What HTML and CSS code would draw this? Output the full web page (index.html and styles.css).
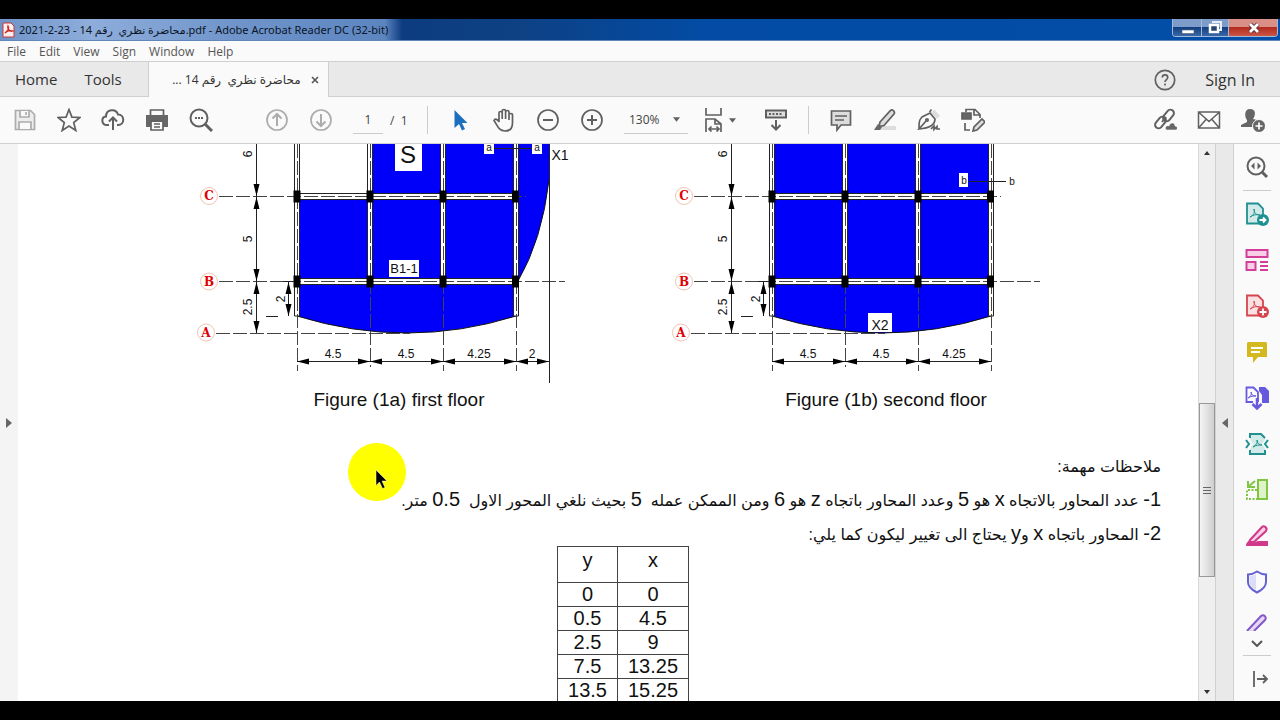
FILE: index.html
```html
<!DOCTYPE html>
<html lang="en">
<head>
<meta charset="utf-8">
<title>Adobe Acrobat Reader DC</title>
<link rel="stylesheet" href="styles.css">
</head>
<body>
<div class="window">
  <header class="titlebar">
    <svg class="app-icon" viewBox="0 0 13 16"><path d="M1 1h8l3 3v11H1z" fill="#fbeeee" stroke="#c33a34"/><path d="M3 11c3-2 4-5 3-7-1 3 2 6 5 5-3-1-6 0-8 2z" fill="none" stroke="#cf2a20" stroke-width="1.3"/></svg>
    <h1 class="title"><bdi dir="rtl">محاضرة نظري  رقم 14 - <bdi dir="ltr">2021-2-23</bdi></bdi>.pdf - Adobe Acrobat Reader DC (32-bit)</h1>
    <div class="controls">
      <button class="ctl" aria-label="Minimize"><svg width="28" height="18"><rect x="9" y="11" width="12" height="3.500" fill="#fff" stroke="#4a5a78" stroke-width=".6"/></svg></button>
      <button class="ctl" aria-label="Restore"><svg width="26" height="18"><path d="M10 3h9v8h-3" fill="none" stroke="#e8edf5" stroke-width="2"/><rect x="8" y="6" width="8" height="7" fill="#28456f" stroke="#fff" stroke-width="2.500"/></svg></button>
      <button class="ctl close" aria-label="Close"><svg width="48" height="18"><path d="M21 5l8 8M29 5l-8 8" stroke="#503038" stroke-width="4.500"/><path d="M21 5l8 8M29 5l-8 8" stroke="#fff" stroke-width="2.800"/></svg></button>
    </div>
  </header>
  <nav class="menubar">
    <button>File</button><button>Edit</button><button>View</button><button>Sign</button><button>Window</button><button>Help</button>
  </nav>
  <div class="tabs">
    <button class="tab home">Home</button>
    <button class="tab tools">Tools</button>
    <div class="tab doc"><bdi class="doc-name" dir="rtl">محاضرة نظري  رقم 14 ...</bdi><button class="tab-close" aria-label="Close tab"><svg width="8" height="8"><path d="M1 1l6 6M7 1L1 7" stroke="#555" stroke-width="1.600"/></svg></button></div>
    <div class="account">
      <button class="help" aria-label="Help"><svg width="22" height="22" fill="none" stroke="#606060" stroke-width="1.700"><circle cx="11" cy="11" r="9.700"/><path d="M8.300 8.500c0-3.500 5.400-3.500 5.400 0 0 2-2.700 2.100-2.700 4.400M11 14.500v2"/></svg></button>
      <button class="signin">Sign In</button>
    </div>
  </div>
  <div class="toolbar">
    <div class="group">
      <button class="tool faded" aria-label="Save"><svg viewBox="0 0 24 24"><path d="M2.500 2.500h15l4 4v15h-19z" fill="#e2e2e2"/><path d="M7 3v6h9V3M6 21v-7h12v7M13 4v3" fill="#fafafa"/></svg></button>
      <button class="tool" aria-label="Star"><svg viewBox="0 0 24 24"><path d="M12 1.500l2.900 7.600 8 .4-6.200 5.100 2.100 7.900-6.800-4.400-6.800 4.400 2.100-7.900L1.100 9.500l8-.4z"/></svg></button>
      <button class="tool" aria-label="Upload"><svg viewBox="0 0 24 24"><path d="M8 17H6c-6 0-6-8-1-8.500C5 1 15 0 17 6.500c7 0 7 10.500 0 10.500h-1M12 22V10M8 13.500L12 9.500l4 4" stroke-width="2"/></svg></button>
      <button class="tool" aria-label="Print"><svg viewBox="0 0 24 24"><path d="M5.500 8V2h13v6"/><path d="M1 7h22v12h-5v-5H6v5H1z" fill="#666" stroke="none"/><path d="M6 13h12v9H6zM9 16h6M9 19h6"/></svg></button>
      <button class="tool" aria-label="Find"><svg viewBox="0 0 24 24"><circle cx="10" cy="10" r="8.500" stroke-width="2"/><path d="M16 16l7 7" stroke-width="3"/><path d="M6 10h8" stroke-width="2" stroke-dasharray="2 1"/></svg></button>
    </div>
    <div class="group pages">
      <button class="tool faded" aria-label="Previous page"><svg viewBox="0 0 24 24"><circle cx="12" cy="12" r="10"/><path d="M12 18V6M7.500 10.500L12 6l4.500 4.500" stroke-width="2"/></svg></button>
      <button class="tool faded" aria-label="Next page"><svg viewBox="0 0 24 24"><circle cx="12" cy="12" r="10"/><path d="M12 6v12M7.500 13.500L12 18l4.500-4.500" stroke-width="2"/></svg></button>
      <input class="page-no" aria-label="Page" value="1"><span class="page-count">/&nbsp; 1</span>
    </div>
    <div class="group view">
      <button class="tool" aria-label="Select"><svg viewBox="0 0 24 24"><path d="M6.500 2v18l4.500-4 3 6.500 3-1.500-3-6h5.500z" fill="#1c6fbd" stroke="none"/></svg></button>
      <button class="tool" aria-label="Hand"><svg viewBox="0 0 24 24"><path d="M7 14V5c0-2 3.200-2 3.200 0v6-8c0-2 3.400-2 3.400 0v8-7c0-2 3.400-2 3.400 0v8-5c0-2 3.500-2 3.500 0v8c0 5-2 8-7.500 8-6.500 0-7.500-5.500-11-10.500 1-2.500 4-1 5 1.500z"/></svg></button>
      <button class="tool" aria-label="Zoom out"><svg viewBox="0 0 24 24"><circle cx="12" cy="12" r="10"/><path d="M7 12h10" stroke-width="2"/></svg></button>
      <button class="tool" aria-label="Zoom in"><svg viewBox="0 0 24 24"><circle cx="12" cy="12" r="10"/><path d="M7 12h10M12 7v10" stroke-width="2"/></svg></button>
      <div class="zoom"><select aria-label="Zoom"><option>130%</option></select><svg class="caret" viewBox="0 0 8 5"><path d="M0 0h8L4 5z"/></svg></div>
      <button class="tool fit" aria-label="Fit width"><svg viewBox="0 0 24 24" stroke-width="2"><path d="M4 0v7h15V0M4 24V11h9l6 5v8M13 11v5h6M7 21h10M9.500 18.500L7 21l2.500 2.500M14.500 18.500L17 21l-2.500 2.500"/></svg><svg class="caret" viewBox="0 0 8 5"><path d="M0 0h8L4 5z"/></svg></button>
      <button class="tool" aria-label="Read mode"><svg viewBox="0 0 24 24"><path d="M2 2.500h20v7H2z" fill="#ddd" stroke-width="2"/><path d="M5 6h14" stroke-width="2" stroke-dasharray="2 1.500"/><path d="M12 12v9M7.500 17L12 21.500 16.500 17" stroke-width="2"/></svg></button>
    </div>
    <div class="group annotate">
      <button class="tool" aria-label="Comment"><svg viewBox="0 0 24 24"><path d="M2.500 3h19v14H12l-4 5v-5H2.500z" fill="#ddd"/><path d="M6 8h12M6 12h9"/></svg></button>
      <button class="tool" aria-label="Highlight"><svg viewBox="0 0 24 24"><path d="M9 18h14v4H6z" fill="#ddd" stroke="none"/><path d="M7 14L17.500 2.500c2-1.500 5 1 3.500 3.500L11 17.500l-5 1z" fill="#ddd"/><path d="M1 22l4-6 4 3-2 3z" fill="#666" stroke="none"/></svg></button>
      <button class="tool" aria-label="Sign"><svg viewBox="0 0 24 24"><path d="M13.500 5l4-3.500L23 8l-3 2.500z" fill="#ddd" stroke="none"/><path d="M2 21c0-6 0-9 3-12l8-4 5 6c0 5-4 9-16 10l7-8M12.500 4l2-2.500"/><circle cx="10" cy="12" r="1.200"/><path d="M14 21l3-3v3.500l3-3v2.500h3"/></svg></button>
      <button class="tool" aria-label="Edit"><svg viewBox="0 0 24 24"><path d="M1 5h9v6H1z" fill="#666"/><path d="M5 4V1.500h9l5 5V10M13 2v5h6M4 15v7h5"/><path d="M12 23l1-4 8-8 3 3-8 8z" fill="#ddd"/></svg></button>
    </div>
    <div class="group share">
      <button class="tool" aria-label="Share link"><svg viewBox="0 0 24 24"><g stroke-width="2"><rect x="9" y="4" width="13" height="7" rx="3.500" transform="rotate(-50 15.500 7.500)"/><rect x="1" y="11" width="13" height="7" rx="3.500" transform="rotate(-50 7.500 14.500)"/><path d="M9 14l4-5"/></g><path d="M13 22c-2-4 2-5 3-4 1-4 6-4 6 0 3 0 3 4 1 4z" fill="#666" stroke="#fafafa" stroke-width=".6"/></svg></button>
      <button class="tool" aria-label="Mail"><svg viewBox="0 0 24 24"><path d="M1.500 4h21v16h-21zM2 4.500l10 9 10-9M2 19.500l7-8M22 19.500l-7-8" stroke-width="1.500"/></svg></button>
      <button class="tool" aria-label="Add people"><svg viewBox="0 0 24 24"><path d="M9 1c-6 0-5.500 8-3 11v2l-6 3v2h13l3-7-4-1c3-4 3-10-3-10z" fill="#666" stroke="none"/><circle cx="18" cy="18" r="6.500" fill="#666" stroke="#fafafa" stroke-width="1"/><path d="M14.500 18h7M18 14.500v7" stroke="#fff"/></svg></button>
    </div>
  </div>
  <div class="workspace">
    <button class="strip left" aria-label="Show navigation pane"><svg width="6" height="10"><path d="M0 0v10l6-5z" fill="#666"/></svg></button>
    <main class="page">
      <div class="figures">
        <figure>
          <svg class="plan" viewBox="179 144 440 240">
            <defs>
              <g id="slab"><path d="M297 144H516V316Q407 350 297 316z" fill="#0000fa"/><path d="M297 316Q407 350 516 316" fill="none" stroke="#111"/></g>
              <g id="frame">
                <g fill="#fff" stroke="#222" stroke-width="1">
                  <path d="M297 193.500h219v6H297zM297 278.500h219v6H297z"/>
                  <path d="M294.500 144v172h5V144M367.500 144v137h5V144M440.500 144v137h5V144M513.500 144v172h5V144"/>
                </g>
                <g fill="none" stroke="#444" stroke-width="1" stroke-dasharray="14 3">
                  <path d="M219 196.500H526M219 281.500H565M216 333.500H410"/>
                  <path d="M297.500 144V371M370.500 144V367M443.500 144V371M516.500 144V371"/>
                </g>
                <g fill="#000"><path d="M293.500 190.500h7v12h-7zM366.500 190.500h7v12h-7zM439.500 190.500h7v12h-7zM512 190.500h7v12h-7zM293.500 275.500h7v12h-7zM366.500 275.500h7v12h-7zM439.500 275.500h7v12h-7zM512 275.500h7v12h-7z"/></g>
                <g fill="none" stroke="#222"><path d="M256.500 144V333M288.500 281V316M266 316.500h12M297 361.500H516M283 281.500h10"/></g>
                <g fill="#000">
                  <path d="M256.500 196l-3-12h6zM256.500 197l-3 12h6zM256.500 281l-3-12h6zM256.500 282l-3 12h6zM256.500 333l-3-12h6zM288.500 282l-3 12h6zM288.500 316l-3-12h6z"/>
                  <path d="M297 361.500l12-3v6zM370 361.500l-12-3v6zM370 361.500l12-3v6zM443 361.500l-12-3v6zM443 361.500l12-3v6zM516 361.500l-12-3v6z"/>
                </g>
                <g fill="#fff" stroke="#f0c4b4"><circle cx="209" cy="196" r="8.500"/><circle cx="209" cy="281.500" r="8.500"/><circle cx="206" cy="332.500" r="8.500"/></g>
              </g>
            </defs>
            <use href="#slab"/>
            <path d="M516 144H549V180Q542 240 518 281H516z" fill="#0000fa"/><path d="M549 180Q542 240 518 281" fill="none" stroke="#111"/>
            <path d="M297 144h73v52h-73z" fill="#fff"/>
            <use href="#frame"/>
            <path d="M549.500 144V383M516 361.500h33" stroke="#222"/><path d="M516 361.500l12-3v6zM549 361.500l-12-3v6z"/>
            <path d="M395 144h27v27h-27zM484 144h10v10h-10zM532 144h10v10h-10zM389 260h30v17h-30z" fill="#fff"/>
            <path d="M494 148.500h38" stroke="#222"/>
            <g class="axis"><text x="209" y="200">C</text><text x="209" y="286">B</text><text x="206" y="337">A</text></g>
            <g class="dim"><text transform="translate(252 154) rotate(-90)">6</text><text transform="translate(252 239) rotate(-90)">5</text><text transform="translate(252 307) rotate(-90)">2.5</text><text transform="translate(285 299) rotate(-90)">2</text>
            <text x="333" y="358">4.5</text><text x="406" y="358">4.5</text><text x="479" y="358">4.25</text><text x="532" y="358">2</text></g>
            <g class="mark"><text class="big" x="408" y="163">S</text><text x="404" y="273">B1-1</text><text class="x" x="560" y="160">X1</text><text class="small" x="489" y="151">a</text><text class="small" x="537" y="151">a</text></g>
          </svg>
          <figcaption>Figure (1a) first floor</figcaption>
        </figure>
        <figure>
          <svg class="plan" viewBox="191 144 440 240">
            <use href="#slab"/><use href="#frame"/>
            <path d="M484 173h9v14h-9zM393 313h24v19h-24z" fill="#fff"/>
            <path d="M494 181.500h37" stroke="#222"/>
            <g class="axis"><text x="209" y="200">C</text><text x="209" y="286">B</text><text x="206" y="337">A</text></g>
            <g class="dim"><text transform="translate(252 154) rotate(-90)">6</text><text transform="translate(252 239) rotate(-90)">5</text><text transform="translate(252 307) rotate(-90)">2.5</text><text transform="translate(285 299) rotate(-90)">2</text>
            <text x="333" y="358">4.5</text><text x="406" y="358">4.5</text><text x="479" y="358">4.25</text></g>
            <g class="mark"><text class="x" x="405" y="330">X2</text><text class="small" x="489" y="184">b</text><text class="small" x="537" y="185">b</text></g>
          </svg>
          <figcaption>Figure (1b) second floor</figcaption>
        </figure>
      </div>
      <section class="notes" dir="rtl" lang="ar">
        <p>ملاحظات مهمة:</p>
        <p><span>1-</span> عدد المحاور بالاتجاه <span>x</span> هو <span>5</span> وعدد المحاور باتجاه <span>z</span> هو <span>6</span> ومن الممكن عمله  <span>5</span> بحيث نلغي المحور الاول  <span>0.5</span> متر.</p>
        <p><span>2-</span> المحاور باتجاه <span>x</span> و<span>y</span> يحتاج الى تغيير ليكون كما يلي:</p>
      </section>
      <table class="coords">
        <thead><tr><th>y</th><th>x</th></tr></thead>
        <tbody><tr><td>0</td><td>0</td></tr><tr><td>0.5</td><td>4.5</td></tr><tr><td>2.5</td><td>9</td></tr><tr><td>7.5</td><td>13.25</td></tr><tr><td>13.5</td><td>15.25</td></tr></tbody>
      </table>
      <svg class="pointer" viewBox="0 0 58 58"><circle cx="29" cy="29" r="29" fill="#ff0"/><path d="M28 27v15.500l3.500-3.500 3 6.500 2.500-1-3-6.500h5z" fill="#000" stroke="#fff" stroke-width=".5"/></svg>
    </main>
    <div class="scrollbar">
      <svg width="6" height="4"><path d="M0 4h6L3 0z" fill="#333"/></svg>
      <div class="thumb"><svg width="8" height="9"><path d="M0 1.500h8M0 4.500h8M0 7.500h8" stroke="#666"/></svg></div>
      <svg width="6" height="4"><path d="M0 0h6L3 4z" fill="#333"/></svg>
    </div>
    <button class="strip right" aria-label="Hide tools pane"><svg width="6" height="10"><path d="M6 0v10L0 5z" fill="#666"/></svg></button>
    <aside class="panel">
      <button class="item" aria-label="Search tools"><svg viewBox="0 0 24 24" stroke="#606060"><circle cx="11" cy="11" r="8.500" stroke-width="2"/><path d="M17 17l5 5" stroke-width="3"/><path d="M9.500 7.500v7L6 11zM12.500 7.500v7L16 11z" fill="#606060" stroke="none"/></svg></button>
      <hr>
      <button class="item" aria-label="Export PDF"><svg viewBox="0 0 24 24" stroke="#1f9090"><path d="M2 1.500h11l5 5v15H2z" fill="#d2ebe9"/><path d="M5 15c4-2 5-5 4-8 0 4 2 6 6 6-4-1-7 0-10 2z" stroke-width="1"/><circle cx="18" cy="18" r="6" fill="#1f9090" stroke="none"/><path d="M14.500 18h6M18 15.500l2.500 2.500-2.500 2.500" stroke="#fff"/></svg></button>
      <button class="item" aria-label="Organize pages"><svg viewBox="0 0 24 24" stroke="#d23e9a"><path d="M1.500 2h21v7h-21zM1.500 14h9v8h-9z" fill="#f8cfe6" stroke-width="2"/><path d="M15 14h8M15 18h8M15 22h8"/></svg></button>
      <button class="item" aria-label="Create PDF"><svg viewBox="0 0 24 24" stroke="#d6444e"><path d="M2 1.500h11l5 5v15H2z" fill="#fae0e0"/><path d="M5 15c4-2 5-5 4-8 0 4 2 6 6 6-4-1-7 0-10 2z" stroke-width="1"/><circle cx="18" cy="18" r="6" fill="#d6444e" stroke="none"/><path d="M14.500 18h7M18 14.500v7" stroke="#fff"/></svg></button>
      <button class="item" aria-label="Comment"><svg viewBox="0 0 24 24"><path d="M3 2h18l1 1v14H13l-5 6v-6H2V3z" fill="#d3b91d"/><path d="M6 8h12M6 12h9" stroke="#fff"/></svg></button>
      <button class="item" aria-label="Combine files"><svg viewBox="0 0 24 24" stroke="#6658df"><path d="M8 16H1.500V1.500h7L13 6v10"/><path d="M3 12c3-2 4-4 3-6 0 3 2 4 5 4-3 0-5 0-8 2z" stroke-width="1"/><path d="M14 1h6l4 4v12h-7V9l-3-4z" fill="#6658df" stroke="none"/><path d="M12 12v10M7.500 18l4.500 4.500 4.500-4.500" stroke-width="2.500"/></svg></button>
      <button class="item" aria-label="Compress PDF"><svg viewBox="0 0 24 24" stroke="#1f9090"><path d="M5 7V2h11l4 4v2l-3 4 3 4v6H5v-5l3-5z" fill="#d2ebe9" stroke="none"/><path d="M5 6V2h11l4 4M5 18v4h15v-4" stroke-width="2"/><path d="M1 8l3 4-3 4M23 8l-3 4 3 4" stroke-width="2"/><path d="M8 15c3-2 5-4 4-7 0 3 2 5 5 5-3 0-6 0-9 2z" stroke-width="1"/></svg></button>
      <button class="item" aria-label="Scan"><svg viewBox="0 0 24 24" stroke="#80c642"><path d="M13 2h9v19h-9z" fill="#dff3cb" stroke-width="2"/><path d="M12 12H2v9h10" stroke-width="2" stroke-dasharray="2 1.500"/><path d="M10 3L4 8M3 3v6h7" stroke-width="2"/></svg></button>
      <button class="item" aria-label="Redact"><svg viewBox="0 0 24 24" stroke="#d23889"><path d="M5 16L17 3c2-2 6 1 4 4L9 18H4z" fill="#f8cfe6" stroke-width="2"/><path d="M1 22c0-4 3-6 6-4 2 2 4-1 7-1h9v5z" fill="#d23889" stroke="none"/></svg></button>
      <button class="item" aria-label="Protect"><svg viewBox="0 0 24 24" stroke="#6461d2"><path d="M12 1.500c3 2 6 3 9 3V12c0 5-4 8-9 10.500C7 20 3 17 3 12V4.500c3 0 6-1 9-3z" stroke-width="2"/><path d="M11 4v16c-4-2-6.500-5-6.500-8V6c3 0 4-.5 6.500-2z" fill="#dcdcf7" stroke="none"/></svg></button>
      <button class="item cut" aria-label="Fill and sign"><svg viewBox="0 0 24 24" stroke="#8457c5"><path d="M2 20L16 5c3-2 6 1 4 4L9 20" fill="#e4d8f6" stroke-width="2"/></svg></button>
      <button class="more" aria-label="More tools"><svg width="12" height="7"><path d="M1 1l5 5 5-5" fill="none" stroke="#555" stroke-width="2"/></svg></button>
      <hr>
      <button class="item" aria-label="Collapse"><svg viewBox="0 0 24 24" stroke="#606060" stroke-width="2"><path d="M9 4v16M12 12h10M18 8l4 4-4 4"/></svg></button>
    </aside>
  </div>
</div>
</body>
</html>
```
FILE: styles.css
```css
* { box-sizing: border-box; }
body {
  margin: 0;
  height: 100vh;
  padding: 19px 0;
  background: #000;
  color: #444;
  font-family: "Open Sans", "DejaVu Sans", sans-serif;
  overflow: hidden;
}
button, input, select { font: inherit; color: inherit; border: 0; background: none; padding: 0; margin: 0; }
svg { display: block; flex: none; }
.window { height: 100%; display: flex; flex-direction: column; background: #fafafa; }

.titlebar {
  display: flex;
  align-items: center;
  flex: none;
  height: 22px;
  padding-left: 2px;
  border-bottom: 1px solid #5f87ba;
  background: linear-gradient(90deg, #6f93c8 0, #8eaddb 90px, #6f94ca 240px, #5c85c0 385px, #0d3c80 402px, #0d4184 520px, #034ba4 700px, #034ea8 100%);
}
.app-icon { width: 13px; height: 16px; }
.title { margin: 0 0 0 4px; font-family: "Noto Sans", "DejaVu Sans", sans-serif; font-size: 11px; line-height: 20px; font-weight: 400; color: #0b1526; white-space: pre; }
.controls { display: flex; margin: 0 2px 3px auto; height: 18px; border: 1px solid #a3bbdb; border-top: 0; border-radius: 0 0 4px 4px; overflow: hidden; }
.ctl { display: flex; background: linear-gradient(#7e9cc9 0 45%, #123f80 50%, #3c68a6); border-right: 1px solid #a3bbdb; }
.ctl.close { border-right: 0; background: linear-gradient(#d98e86 0 45%, #b32a1e 50%, #cc5646); }

.menubar { display: flex; align-items: center; flex: none; height: 20px; gap: 13px; padding: 1px 0 0 7px; font-size: 12px; line-height: 18px; color: #555; }

.tabs { display: flex; flex: none; height: 36px; border-top: 1px solid #cfcfcf; background: #e9e9e9; box-shadow: inset 0 -1px #cfcfcf; font-size: 15px; color: #333; }
.home, .tools { padding: 0 14px 2px 15px; }
.tools { padding: 0 26px 2px 13px; }
.doc { display: flex; align-items: center; justify-content: flex-end; gap: 10px; width: 181px; padding-right: 9px; background: #fafafa; border: solid #cfcfcf; border-width: 0 1px; font-size: 12px; }
.doc-name { white-space: pre; }
.account { display: flex; align-items: center; gap: 29px; margin-left: auto; padding-right: 25px; font-size: 16px; }

.toolbar { display: flex; align-items: center; flex: none; height: 47px; padding: 0 5px 0 3px; border-bottom: 1px solid #d0d0d0; }
.group { display: flex; align-items: center; }
.tool { display: flex; align-items: center; justify-content: center; width: 44px; height: 44px; }
.tool > svg { width: 24px; height: 24px; fill: none; stroke: #606060; stroke-width: 1.7; }
.tool.faded { opacity: .5; }
.pages { margin-left: 32px; }
.page-no { width: 30px; height: 28px; margin: 0 7px 0 10px; border-bottom: 1px solid #ccc; text-align: center; font-size: 12px; }
.page-count { width: 37px; font-size: 12px; }
.view { padding: 0 10px; border-left: 1px solid #ccc; border-right: 1px solid #ccc; height: 28px; }
.zoom { display: flex; align-items: center; width: 64px; height: 28px; margin: 0 9px 0 10px; padding: 0 8px 0 5px; border-bottom: 1px solid #ccc; font-size: 12px; }
.zoom select { appearance: none; flex: 1; min-width: 0; }
.caret, .tool > .caret { width: 7px; height: 5px; fill: #606060; stroke: none; }
.tool.fit { gap: 3px; margin-right: 13px; }
.annotate { margin-left: 10px; }
.share { margin-left: auto; }

.workspace { display: flex; flex: 1; min-height: 0; }
.strip { display: flex; align-items: center; justify-content: center; width: 18px; background: #f4f4f4; }
.strip.right { width: 19px; background: #e9e9e9; border: solid #d0d0d0; border-width: 0 1px; }
.page { position: relative; flex: 1; min-width: 0; overflow: hidden; background: #fff; color: #111; font-family: "Liberation Sans", "DejaVu Sans", sans-serif; }
.figures { display: flex; gap: 47px; padding-left: 161px; }
figure { margin: 0; }
.plan { width: 440px; height: 240px; }
figcaption { padding-top: 4px; text-align: center; font-size: 19px; line-height: 24px; }
.axis { font: bold 12px "DejaVu Serif", serif; fill: #e00000; text-anchor: middle; }
.dim { font-size: 12px; text-anchor: middle; fill: #111; }
.mark { font-size: 13px; text-anchor: middle; fill: #111; }
.mark .big { font-size: 24px; }
.mark .x { font-size: 14px; }
.mark .small { font-size: 10px; }
.notes { display: flex; flex-direction: column; gap: 12px; padding: 44px 37px 0 0; font-size: 16px; line-height: 22px; white-space: pre; }
.notes p { margin: 0; }
.notes span { font-size: 20px; line-height: 1px; }
.coords { margin-left: 539px; border-collapse: collapse; table-layout: fixed; width: 132px; font-size: 20px; line-height: 20px; text-align: center; }
.coords th, .coords td { padding: 0 0 2px; height: 24px; border: 1px solid #444; font-weight: 400; }
.coords th { height: 36px; padding-bottom: 10px; }
.coords th:first-child { width: 60px; }
.pointer { position: absolute; left: 330px; top: 299px; width: 58px; height: 58px; }

.scrollbar { display: flex; flex-direction: column; align-items: center; width: 17px; padding: 7px 0; background: #efefef; border-left: 1px solid #d8d8d8; }
.thumb { display: flex; align-items: center; justify-content: center; width: 16px; height: 174px; margin: 248px 0 auto; border: 1px solid #999; background: linear-gradient(90deg, #f4f4f4, #cfcfcf); }

.panel { display: flex; flex-direction: column; align-items: center; width: 46px; background: #fafafa; }
.panel hr { flex: none; width: 28px; margin: 0; border: 0; border-top: 1px solid #ccc; }
.item { display: flex; align-items: center; justify-content: center; flex: none; width: 46px; height: 46px; }
.item svg { width: 24px; height: 24px; fill: none; stroke-width: 1.8; }
.item.cut { align-items: flex-start; height: 26px; padding-top: 6px; overflow: hidden; }
.more { display: flex; align-items: center; justify-content: center; flex: none; height: 24px; }
```
